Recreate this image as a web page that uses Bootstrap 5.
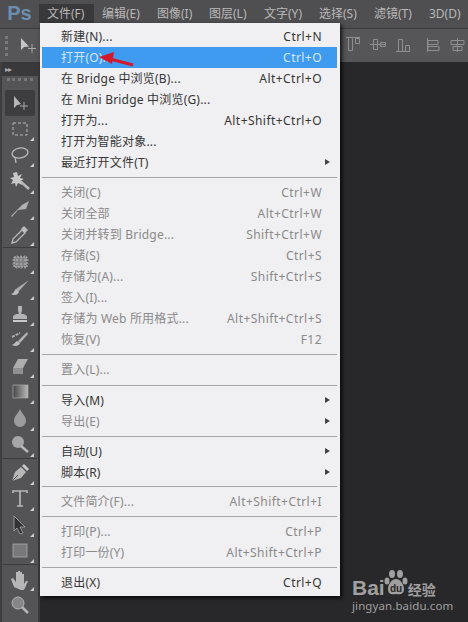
<!DOCTYPE html>
<html lang="zh-CN">
<head>
<meta charset="UTF-8">
<title>Photoshop 文件菜单</title>
<link href="https://cdn.jsdelivr.net/npm/bootstrap@5.3.3/dist/css/bootstrap.min.css" rel="stylesheet">
<style>
html,body{height:100%;margin:0;overflow:hidden}
body{background:#282729;font-family:"Noto Sans","Noto Sans CJK SC",sans-serif;font-size:12px;color:#c8c8c8}
.ps-shell{height:622px;position:relative}
.ps-menubar{height:28px;background:#4f4e50;padding:4px 0 0 0;align-items:flex-start;flex-wrap:nowrap}
.ps-logo{flex:none;width:39px;text-align:center;font:bold 20px/19px "Liberation Sans",sans-serif;color:#6c8fb0}
.ps-top{flex:none;width:55px;height:19px;line-height:19px;padding-left:8px;white-space:nowrap;color:#b9b9b9}
.ps-top.on{background:#39383a}
.ps-top.tight{width:52px}
.ps-options{height:34px;background:#565557;border-top:1px solid #3b3a3c;display:flex;align-items:center;padding-left:5px;gap:9px}
.ps-optgrip{width:5px;height:20px;border-left:3px dotted #7a797b}
.ps-body{height:560px}
.ps-tools{width:40px;background:#545355;border-left:2px solid #3e3d3f;border-right:2px solid #3a393b;position:relative}
.ps-collapse{height:14px;background:#39383a;color:#aaa;font-size:8px;line-height:13px;padding-left:3px;letter-spacing:-1px}
.ps-grip{height:6px;margin:2px 5px 0;border-top:3px dotted #777}
.ps-tool{height:26.15px;width:36px;position:relative}
.ps-tool svg{display:block;margin:auto;width:22px;height:22px;position:relative;top:2px;opacity:.85}
.ps-tool.sel{background:#3d3c3e;border-radius:2px;width:30px;margin:6px 3px 0}
.ps-tool.more::after{content:"";position:absolute;right:4px;bottom:1px;border-left:4px solid transparent;border-bottom:4px solid #ccc}
.ps-tool.last{margin-top:1px}
.ps-tooldiv{border-top:1px solid #3c3b3d;margin:0 1px .75px}
.ps-menu.dropdown-menu{position:absolute;left:40px;top:23px;width:300px;height:573px;margin:0;padding:3px 3px 3px 2px;background:#f0eff1;border:0;border-radius:0;font-size:12px;box-shadow:2px 2px 4px rgba(0,0,0,.8);display:block}
.ps-menu .dropdown-item{display:flex;justify-content:space-between;align-items:center;height:21px;line-height:21px;padding:0 15px 0 19px;color:#363636;font-size:12px;position:relative;letter-spacing:.2px}
.ps-menu .dropdown-item span+span{letter-spacing:.45px}
.ps-menu .dropdown-item.disabled{color:#8a8a8a}
.ps-menu .dropdown-item.active{background:#3f9bf0;color:#d6e8fa}
.ps-menu .has-sub::after{content:"";position:absolute;right:7px;top:7px;border-left:5px solid #444;border-top:3px solid transparent;border-bottom:3px solid transparent}
.ps-menu .dropdown-divider{margin:4px 0 4px;border-top:1px solid #a6a5a7;opacity:1}
.ps-menu .dropdown-divider.low{margin:4.5px 0 4.5px}
.ps-menu .dropdown-divider.snug{margin:3px 0 4px}
.ps-arrow{position:absolute;left:96px;top:50px;z-index:1001}
.ps-align{position:absolute;top:37px;left:345px}
.ps-mark{position:absolute;left:352px;top:567px;width:112px;color:#a0a0a0;text-align:left}
.ps-mark-top{font:bold 21px/20px "Liberation Sans",sans-serif;display:flex;align-items:flex-end;height:31px}
.ps-mark-top svg{margin-left:-1px}
.ps-mark-jy{font:bold 14px/18px "Noto Sans CJK SC",sans-serif;margin-left:0;letter-spacing:0}
.ps-mark-url{font:11.5px/14px "Noto Sans",sans-serif;margin-top:1px;letter-spacing:.1px}
</style>
</head>
<body>
<div class="ps-shell">
  <div class="ps-menubar d-flex">
    <div class="ps-logo">Ps</div>
    <div class="ps-top on">文件(F)</div>
    <div class="ps-top">编辑(E)</div>
    <div class="ps-top tight">图像(I)</div>
    <div class="ps-top">图层(L)</div>
    <div class="ps-top">文字(Y)</div>
    <div class="ps-top">选择(S)</div>
    <div class="ps-top">滤镜(T)</div>
    <div class="ps-top">3D(D)</div>
  </div>
  <div class="ps-options">
    <div class="ps-optgrip"></div>
    <svg width="20" height="18" viewBox="0 0 20 18"><path d="M2 1v12l3-3 5-.5z" fill="#c6c6c6"/><path d="M13 7v9M9 11.500h8" stroke="#aaa"/></svg>
  </div>
  <div class="ps-body d-flex">
    <div class="ps-tools">
      <div class="ps-collapse">▸▸</div>
      <div class="ps-grip"></div>
      <div class="ps-tool sel"><svg viewBox="0 0 22 22"><path d="M5 4v12l3-3 1 0 3-1z" fill="#ccc"/><path d="M15 10v8M11 14h8" stroke="#bbb"/></svg></div>
      <div class="ps-tool more"><svg viewBox="0 0 22 22"><rect x="4" y="5" width="14" height="12" fill="none" stroke="#ccc" stroke-dasharray="3 2"/></svg></div>
      <div class="ps-tool more"><svg viewBox="0 0 22 22"><ellipse cx="11" cy="9" rx="8" ry="5" fill="none" stroke="#ccc" stroke-width="1.4" transform="rotate(-10 11 9)"/><path d="M6 13l1 6" stroke="#ccc" stroke-width="1.4"/></svg></div>
      <div class="ps-tool more"><svg viewBox="0 0 22 22"><path d="M11 11l9 8" stroke="#ccc" stroke-width="2.400"/><path d="M8 2l1 4 4-2-2 4 4 1-4 2 2 4-4-2-2 4-1-4-4 1 2-4-3-2 4-1-1-4z" fill="#ddd"/></svg></div>
      <div class="ps-tool more"><svg viewBox="0 0 22 22"><path d="M2 19L13 8l7-4-3 8-8 1-6 7z" fill="#c2c2c2"/></svg></div>
      <div class="ps-tool more"><svg viewBox="0 0 22 22"><path d="M3 20l1-4 9-9 3 3-9 9z" fill="none" stroke="#ccc" stroke-width="1.3"/><path d="M12 6l3-3 4 4-3 3z" fill="#ccc"/></svg></div>
      <div class="ps-tooldiv"></div>
      <div class="ps-tool more"><svg viewBox="0 0 22 22"><rect x="5" y="6" width="13" height="10" fill="#8b8a8c" stroke="#d5d5d5" stroke-dasharray="2 1"/><path d="M3 9h17M3 13h17M8 4v14M12 4v14M16 4v14" stroke="#ccc" stroke-width=".6" stroke-dasharray="2 2"/></svg></div>
      <div class="ps-tool more"><svg viewBox="0 0 22 22"><path d="M20 3L10 14l-3-2z" fill="#bcbcbc"/><path d="M7 12c-2 1-1 4-5 5 3 2 8 1 8-3z" fill="#d0d0d0"/></svg></div>
      <div class="ps-tool more"><svg viewBox="0 0 22 22"><path d="M9 3h4v5l-1 3h3l3 2v3H4v-3l3-2h3L9 8z" fill="#c4c4c4"/><rect x="4" y="17" width="14" height="2" fill="#ddd"/></svg></div>
      <div class="ps-tool more"><svg viewBox="0 0 22 22"><path d="M18 3L9 12l2 2 8-9z" fill="#c4c4c4"/><path d="M8 12c-2 1-2 3-5 4 3 2 7 1 8-2z" fill="#d0d0d0"/><path d="M3 8l8-4" stroke="#bbb" stroke-width="2" stroke-dasharray="3 1"/></svg></div>
      <div class="ps-tool more"><svg viewBox="0 0 22 22"><path d="M9 4h10l-5 9H4z" fill="#bdbdbd"/><path d="M4 13h10v6H4z" fill="#9a999b"/></svg></div>
      <div class="ps-tool more"><svg viewBox="0 0 22 22"><defs><linearGradient id="gr"><stop offset="0" stop-color="#444"/><stop offset="1" stop-color="#ccc"/></linearGradient></defs><rect x="4" y="4" width="15" height="13" fill="url(#gr)" stroke="#bbb" stroke-width=".7"/></svg></div>
      <div class="ps-tool more"><svg viewBox="0 0 22 22"><path d="M11 2c2 5 6 7 6 12a6 6 0 0 1-12 0c0-5 4-7 6-12z" fill="#a9a8aa"/></svg></div>
      <div class="ps-tool more"><svg viewBox="0 0 22 22"><circle cx="9" cy="8" r="6" fill="#b5b4b6"/><path d="M12 12l7 6" stroke="#ccc" stroke-width="2.400"/></svg></div>
      <div class="ps-tooldiv"></div>
      <div class="ps-tool more"><svg viewBox="0 0 22 22"><path d="M3 20l3-9 6-5 5 5-5 6z" fill="#c9c9c9"/><path d="M13 5l2-2 5 5-2 2z" fill="#ddd"/><path d="M3 20l6-6" stroke="#555"/></svg></div>
      <div class="ps-tool more"><svg viewBox="0 0 22 22"><path d="M4 5V3h14v2M11 3v15M8 18h6" fill="none" stroke="#c8c8c8" stroke-width="1.7"/></svg></div>
      <div class="ps-tool more"><svg viewBox="0 0 22 22"><path d="M5 2l11 11h-5l3 6-3 1-3-6-3 3z" fill="#2d2c2e" stroke="#bbb" stroke-width=".8"/></svg></div>
      <div class="ps-tool more"><svg viewBox="0 0 22 22"><rect x="4" y="4" width="14" height="13" fill="#807f81" stroke="#bbb" stroke-width=".8"/></svg></div>
      <div class="ps-tooldiv"></div>
      <div class="ps-tool more"><svg viewBox="0 0 22 22"><path d="M5 19L2 11l2-1 3 4V4h2v7-8h2v8-7h2v7-5h2v10l2-3h2l-3 7-2 3z" fill="#c8c8c8"/></svg></div>
      <div class="ps-tool last"><svg viewBox="0 0 22 22"><circle cx="9" cy="8" r="6" fill="#8f8e90" stroke="#c4c4c4"/><path d="M13 12l6 6" stroke="#c4c4c4" stroke-width="2.600"/></svg></div>
    </div>
  </div>

  <svg class="ps-align" width="120" height="16" viewBox="0 0 120 16" fill="none" stroke="#8f8e90">
    <path d="M1 .5h14M3.500 1.500v12h4v-12M10.500 1.500h4v5h-4z"/>
    <path d="M25 7.500h16M28.500 2.500h4v10h-4zM35.500 5.500h5v4h-5z"/>
    <path d="M51 14.500h14M53.500 2.500h4v12h-4zM60.500 8.500h4v6h-4z"/>
    <path d="M82.500 1v14M83 3.500h10v4H83zM83 9.500h11v4H83z"/>
    <path d="M112.500 1v14M106 3.500h13v4h-13zM108 9.500h9v4h-9z"/>
  </svg>

  <div class="dropdown-menu ps-menu">
    <a class="dropdown-item"><span>新建(N)...</span><span>Ctrl+N</span></a>
    <a class="dropdown-item active"><span>打开(O)...</span><span>Ctrl+O</span></a>
    <a class="dropdown-item"><span>在 Bridge 中浏览(B)...</span><span>Alt+Ctrl+O</span></a>
    <a class="dropdown-item"><span>在 Mini Bridge 中浏览(G)...</span></a>
    <a class="dropdown-item"><span>打开为...</span><span>Alt+Shift+Ctrl+O</span></a>
    <a class="dropdown-item"><span>打开为智能对象...</span></a>
    <a class="dropdown-item has-sub"><span>最近打开文件(T)</span></a>
    <hr class="dropdown-divider">
    <a class="dropdown-item disabled"><span>关闭(C)</span><span>Ctrl+W</span></a>
    <a class="dropdown-item disabled"><span>关闭全部</span><span>Alt+Ctrl+W</span></a>
    <a class="dropdown-item disabled"><span>关闭并转到 Bridge...</span><span>Shift+Ctrl+W</span></a>
    <a class="dropdown-item disabled"><span>存储(S)</span><span>Ctrl+S</span></a>
    <a class="dropdown-item disabled"><span>存储为(A)...</span><span>Shift+Ctrl+S</span></a>
    <a class="dropdown-item disabled"><span>签入(I)...</span></a>
    <a class="dropdown-item disabled"><span>存储为 Web 所用格式...</span><span>Alt+Shift+Ctrl+S</span></a>
    <a class="dropdown-item disabled"><span>恢复(V)</span><span>F12</span></a>
    <hr class="dropdown-divider">
    <a class="dropdown-item disabled"><span>置入(L)...</span></a>
    <hr class="dropdown-divider low">
    <a class="dropdown-item has-sub"><span>导入(M)</span></a>
    <a class="dropdown-item disabled has-sub"><span>导出(E)</span></a>
    <hr class="dropdown-divider">
    <a class="dropdown-item has-sub"><span>自动(U)</span></a>
    <a class="dropdown-item has-sub"><span>脚本(R)</span></a>
    <hr class="dropdown-divider snug">
    <a class="dropdown-item disabled"><span>文件简介(F)...</span><span>Alt+Shift+Ctrl+I</span></a>
    <hr class="dropdown-divider">
    <a class="dropdown-item disabled"><span>打印(P)...</span><span>Ctrl+P</span></a>
    <a class="dropdown-item disabled"><span>打印一份(Y)</span><span>Alt+Shift+Ctrl+P</span></a>
    <hr class="dropdown-divider">
    <a class="dropdown-item"><span>退出(X)</span><span>Ctrl+Q</span></a>
  </div>

  <svg class="ps-arrow" width="42" height="20" viewBox="0 0 42 20"><path d="M37 15L14 9" stroke="#d5192c" stroke-width="3"/><path d="M3 7l15-5-2 12z" fill="#d5192c"/></svg>

  <div class="ps-mark">
    <div class="ps-mark-top">
      <span>Bai</span>
      <svg width="24" height="30" viewBox="0 0 24 30"><g fill="#a0a0a0"><ellipse cx="8" cy="6" rx="3" ry="4"/><ellipse cx="16" cy="6" rx="3" ry="4"/><ellipse cx="3" cy="13" rx="2.500" ry="3.500"/><ellipse cx="21" cy="13" rx="2.500" ry="3.500"/><path d="M12 11c4 0 8 5 8 10 0 5-4 6-8 5-4 1-8 0-8-5 0-5 4-10 8-10z"/></g><text x="12" y="24" text-anchor="middle" font-family="Liberation Sans" font-size="10" font-weight="700" fill="#282729">du</text></svg>
      <span class="ps-mark-jy">经验</span>
    </div>
    <div class="ps-mark-url">jingyan.baidu.com</div>
  </div>
</div>
<script src="https://cdn.jsdelivr.net/npm/bootstrap@5.3.3/dist/js/bootstrap.bundle.min.js"></script>
</body>
</html>
